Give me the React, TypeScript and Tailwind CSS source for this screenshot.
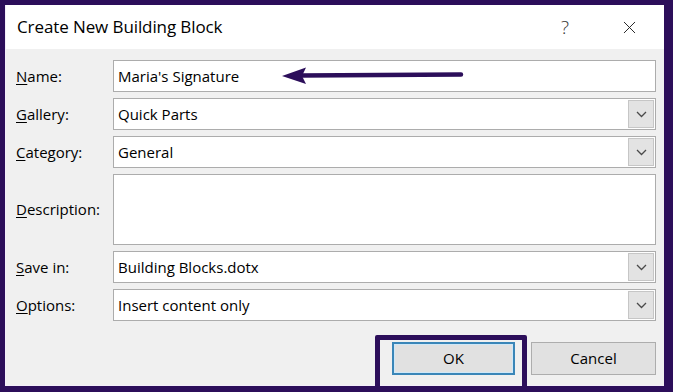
import { X } from "lucide-react";

const font = { fontFamily: '"Open Sans", "Noto Sans", sans-serif' };

function Chevron() {
  return (
    <svg width="11" height="7" viewBox="0 0 11 7" fill="none">
      <path d="M1 1l4.5 4.5L10 1" stroke="#4a4a4a" strokeWidth="1.3" />
    </svg>
  );
}

function Field({ value, dropdown, tall }: { value?: string; dropdown?: boolean; tall?: boolean }) {
  return (
    <div
      className={`flex items-center bg-white border border-[#acacac] ${tall ? "h-[71px]" : "h-[32px]"}`}
    >
      <span className="flex-1 pl-[4px] text-[15px] text-black leading-none">{value}</span>
      {dropdown && (
        <div className="mr-[1px] h-[28px] w-[26px] flex items-center justify-center bg-[#e3e3e3] border border-[#c6c6c6]">
          <Chevron />
        </div>
      )}
    </div>
  );
}

function Label({ accel, rest }: { accel: string; rest: string }) {
  return (
    <span className="text-[15px] text-black">
      <u className="underline-offset-2">{accel}</u>
      {rest}
    </span>
  );
}

export default function App() {
  const rows = [
    { accel: "N", rest: "ame:", value: "Maria's Signature" },
    { accel: "G", rest: "allery:", value: "Quick Parts", dropdown: true },
    { accel: "C", rest: "ategory:", value: "General", dropdown: true },
    { accel: "D", rest: "escription:", tall: true },
    { accel: "S", rest: "ave in:", value: "Building Blocks.dotx", dropdown: true },
    { accel: "O", rest: "ptions:", value: "Insert content only", dropdown: true },
  ];

  return (
    <div className="w-[673px] h-[392px] bg-[#2c0e5a] pt-[5px] pl-[5px] pr-[9px] pb-[6px] overflow-hidden" style={font}>
      <div className="relative h-full flex flex-col border-l border-b border-[#f4eefa]">
        {/* Title bar */}
        <div className="h-[44px] bg-white flex items-center pl-[11px] pr-[24px]">
          <span className="flex-1 text-[17px] text-black tracking-[-0.1px]">Create New Building Block</span>
          <span className="text-[19px] text-[#333] mr-[50px] font-light">?</span>
          <X size={21} strokeWidth={1.1} className="text-[#222]" />
        </div>

        {/* Body */}
        <div className="flex-1 bg-[#f0f0f0] pt-[11px] pl-[10px] pr-[8px] flex flex-col">
          <div className="flex flex-col gap-[6px]">
            {rows.map((r) => (
              <div key={r.accel} className="grid grid-cols-[97px_1fr] items-center">
                <Label accel={r.accel} rest={r.rest} />
                <Field value={r.value} dropdown={r.dropdown} tall={r.tall} />
              </div>
            ))}
          </div>

          <div className="mt-[21px] flex justify-end gap-[16px]">
            <div className="relative">
              <div className="absolute left-[-17px] right-[-12px] top-[-7px] bottom-[-16px] border-[5px] border-[#2c0e5a] rounded-[2px]" />
              <button className="relative w-[123px] h-[33px] bg-[#e1e1e1] border-2 border-[#3a86b8] outline outline-1 outline-[#cfe8f8] -outline-offset-3 text-[15px] text-black">
                OK
              </button>
            </div>
            <button className="w-[125px] h-[33px] bg-[#e1e1e1] border border-[#adadad] text-[15px] text-black">
              Cancel
            </button>
          </div>
        </div>

        {/* Arrow pointing at Name field */}
        <svg className="absolute left-[275px] top-[61px]" width="190" height="20" viewBox="0 0 190 20">
          <path d="M20 9.5L180 8.5" stroke="#2c0e5a" strokeWidth="4.5" strokeLinecap="round" />
          <path d="M1 10L25 1.5L21 10L25 18Z" fill="#2c0e5a" />
        </svg>
      </div>
    </div>
  );
}
